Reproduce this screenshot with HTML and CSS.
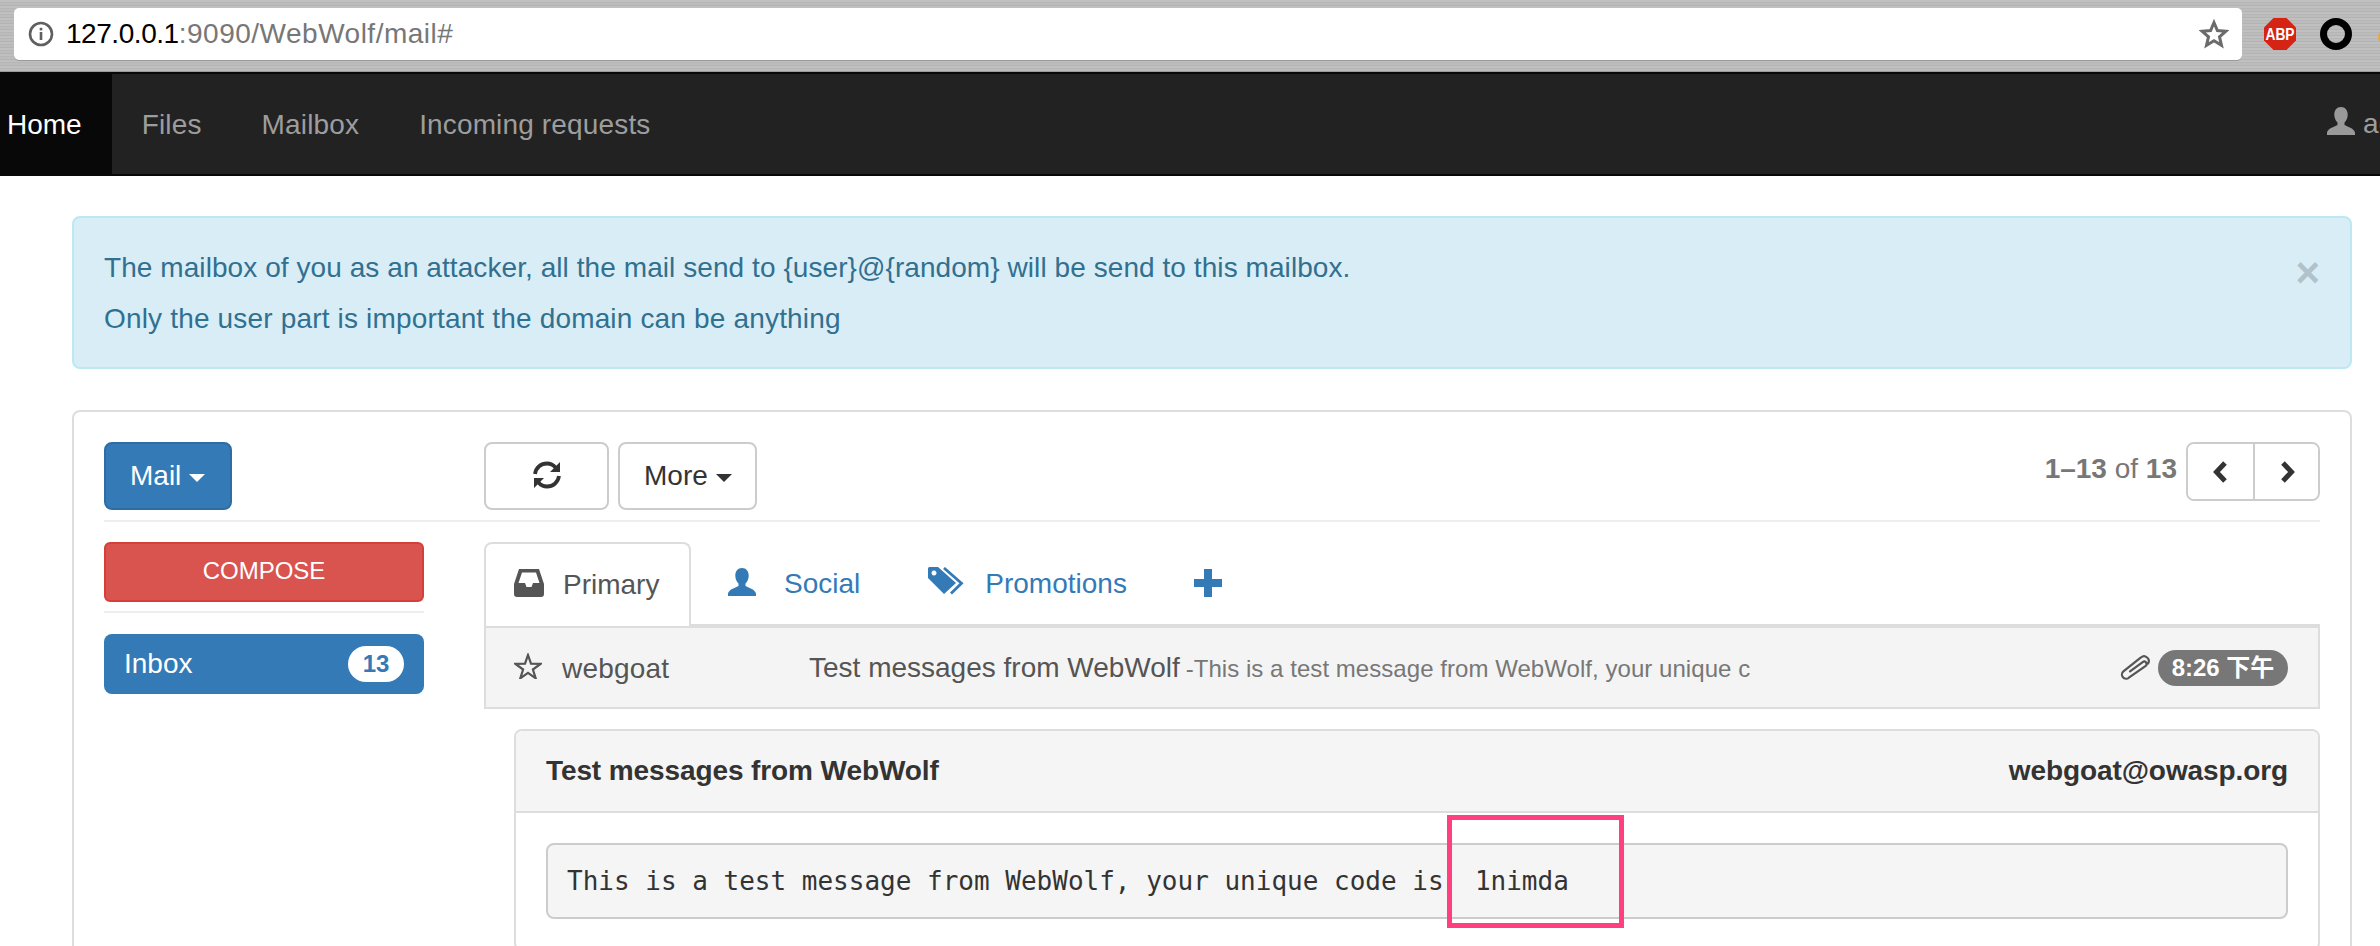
FILE: index.html
```html
<!DOCTYPE html>
<html lang="en">
<head>
<meta charset="utf-8">
<title>WebWolf mail</title>
<link rel="stylesheet" href="styles.css">
</head>
<body>
<header class="chrome">
  <div class="urlbar">
    <svg class="i-info" viewBox="0 0 26 26"><circle cx="13" cy="13" r="11" fill="none" stroke="#5f5f5f" stroke-width="2.6"/><rect x="11.7" y="11" width="2.6" height="8" fill="#5f5f5f"/><rect x="11.7" y="6.8" width="2.6" height="2.6" fill="#5f5f5f"/></svg>
    <span class="url"><span class="url-host">127.0.0.1</span>:9090/WebWolf/mail#</span>
    <svg class="i-bookmark" viewBox="0 0 30 30"><path d="M15 3.5l3.4 8 8.6.7-6.5 5.7 2 8.4-7.5-4.500-7.500 4.500 2-8.400L3 12.200l8.600-.7z" fill="none" stroke="#6b6b6b" stroke-width="3"/></svg>
  </div>
  <svg class="i-abp" viewBox="0 0 32 32"><path d="M9.500 0h13L32 9.500v13L22.500 32h-13L0 22.500v-13z" fill="#d52314"/><text class="abp-text" text-anchor="middle" transform="translate(16 22) scale(.95 1.2)">ABP</text></svg>
  <span class="ring"></span>
  <span class="ext-dot"></span>
</header>

<nav class="navbar">
  <a class="nav-link nav-active">Home</a>
  <a class="nav-link">Files</a>
  <a class="nav-link">Mailbox</a>
  <a class="nav-link">Incoming requests</a>
  <div class="nav-user">
    <svg class="i-user-nav" viewBox="0 0 28 28"><path d="M14 0c-4.300 0-6.700 3.400-6.700 7.600 0 3.300 1.300 6.200 3.200 8v2.400C8 19.600 1 21 0 25.500V28h28v-2.500c-1-4.500-8-5.900-10.500-7.500v-2.400c1.900-1.800 3.200-4.700 3.200-8C20.700 3.400 18.300 0 14 0z" fill="#999"/></svg>
    <span>admin</span>
  </div>
</nav>

<main class="page">
  <section class="alert">
    <span class="close">×</span>
    <p class="alert-line">The mailbox of you as an attacker, all the mail send to {user}@{random} will be send to this mailbox.</p>
    <p class="alert-line">Only the user part is important the domain can be anything</p>
  </section>

  <section class="card">
    <div class="toolbar">
      <div class="toolbar-left">
        <button class="btn btn-primary">Mail <span class="caret caret-light"></span></button>
      </div>
      <div class="toolbar-right">
        <button class="btn btn-default btn-refresh">
          <svg class="i-refresh" viewBox="0 0 28 28"><g fill="none" stroke="#333" stroke-width="3.800"><path d="M2 13C3 6.500 8 2.500 14 2.500c3.600 0 6.400 1.500 8.500 4"/><path d="M26 15c-1 6.500-6 10.500-12 10.500-3.600 0-6.400-1.500-8.500-4"/></g><path d="M27 1v10H17zM1 27V17h10z" fill="#333"/></svg>
        </button>
        <button class="btn btn-default btn-more">More <span class="caret"></span></button>
        <div class="pager-wrap">
          <span class="count"><strong>1–13</strong> of <strong>13</strong></span>
          <div class="btn-group">
            <button class="pg"><svg class="i-chev" viewBox="0 0 16 22"><path d="M12 2L3.500 11l8.500 9" fill="none" stroke="#333" stroke-width="5"/></svg></button>
            <button class="pg pg-next"><svg class="i-chev" viewBox="0 0 16 22"><path d="M4 2l8.500 9L4 20" fill="none" stroke="#333" stroke-width="5"/></svg></button>
          </div>
        </div>
      </div>
    </div>

    <div class="mail">
      <aside class="side">
        <button class="compose">COMPOSE</button>
        <div class="side-rule"></div>
        <a class="inbox"><span>Inbox</span><span class="inbox-badge">13</span></a>
      </aside>

      <div class="content">
        <ul class="tabs">
          <li class="tab tab-active">
            <svg class="i-tab" viewBox="0 0 30 28"><path d="M5 0h20l5 15v10a3 3 0 0 1-3 3H3a3 3 0 0 1-3-3V15zM8 3.500L4.500 14H11l1.500 4h5L19 14h6.500L22 3.500z" fill="#555" fill-rule="evenodd"/></svg>
            <span>Primary</span>
          </li>
          <li class="tab">
            <svg class="i-tab" viewBox="0 0 28 28"><path d="M14 0c-4.300 0-6.700 3.400-6.700 7.600 0 3.300 1.300 6.200 3.200 8v2.400C8 19.600 1 21 0 25.500V28h28v-2.500c-1-4.500-8-5.900-10.500-7.500v-2.400c1.900-1.800 3.200-4.700 3.200-8C20.700 3.400 18.300 0 14 0z" fill="#337ab7"/></svg>
            <span>Social</span>
          </li>
          <li class="tab tab-tags">
            <svg class="i-tags" viewBox="0 0 36 28"><path d="M0 1.500A1.500 1.500 0 0 1 1.500 0H10l18 16-12 11L0 11zM6 3.500a2.500 2.500 0 1 0 .01 0z" fill="#337ab7" fill-rule="evenodd"/><path d="M16 1l17.500 15.200L23 26.500" fill="none" stroke="#337ab7" stroke-width="2.800"/></svg>
            <span>Promotions</span>
          </li>
          <li class="tab">
            <svg class="i-plus" viewBox="0 0 28 28"><path d="M10 0h8v10h10v8H18v10h-8V18H0v-8h10z" fill="#337ab7"/></svg>
          </li>
        </ul>

        <div class="row">
          <svg class="i-star" viewBox="0 0 28 26"><path d="M14 2l3 8.700 9.500.2-7.600 5.600 2.800 8.800L14 19.900l-7.700 5.400 2.800-8.800L1.500 10.900l9.500-.2z" fill="none" stroke="#555" stroke-width="2.200"/></svg>
          <span class="sender">webgoat</span>
          <span class="subject">Test messages from WebWolf <small class="preview">-This is a test message from WebWolf, your unique c</small></span>
          <svg class="i-clip" viewBox="0 0 30 24"><path d="M10 16.500L21.500 8a2.200 2.200 0 0 1 2.800 3.400L9 22.200A3.800 3.800 0 0 1 4 16.400L20 3.800a4.300 4.300 0 0 1 6.500 5.400" fill="none" stroke="#555" stroke-width="2" stroke-linecap="round"/></svg>
          <span class="time">8:26 下午</span>
        </div>

        <article class="panel">
          <div class="panel-head">
            <span>Test messages from WebWolf</span>
            <span>webgoat@owasp.org</span>
          </div>
          <div class="panel-body">
            <pre class="code">This is a test message from WebWolf, your unique code is  1nimda</pre>
            <div class="highlight"></div>
          </div>
        </article>
      </div>
    </div>
  </section>
</main>
</body>
</html>
```

FILE: styles.css
```css
* { box-sizing: border-box; }
html, body { margin: 0; padding: 0; overflow: hidden; height: 100%; background: #fff; }
body { font-family: "Liberation Sans", Arial, sans-serif; font-size: 28px; line-height: 40px; color: #333; }
button { font: inherit; cursor: pointer; }

.chrome {
  height: 72px; display: flex; align-items: flex-start; padding: 8px 0 0 14px; overflow: hidden;
  background: repeating-linear-gradient(180deg, #c0c0c0 0, #c0c0c0 2px, #b6b6b6 2px, #b6b6b6 3px, #bcbcbc 3px, #bcbcbc 5px, #b3b3b3 5px, #b3b3b3 6px);
  border-bottom: 1px solid #9a9a9a;
}
.urlbar { width: 2228px; height: 52px; flex: none; background: #fff; border-radius: 5px; display: flex; align-items: center; padding: 0 13px 0 14px; box-shadow: 0 1px 0 #999; }
.i-info { width: 26px; height: 26px; flex: none; }
.url { margin-left: 12px; font-size: 28px; color: #777; flex: 1; letter-spacing: .5px; }
.url-host { color: #000; letter-spacing: -.45px; }
.i-bookmark { width: 30px; height: 30px; flex: none; }
.i-abp { width: 32px; height: 32px; flex: none; margin: 10px 0 0 22px; }
.abp-text { font: bold 14.5px "Liberation Sans", sans-serif; fill: #fff; }
.ring { width: 32px; height: 32px; flex: none; margin: 10px 0 0 24px; border-radius: 50%; border: 7px solid #000; }
.ext-dot { width: 14px; height: 14px; flex: none; margin: 22px 0 0 26px; border-radius: 50%; background: #e8a93c; }

.navbar { height: 104px; display: flex; background: #222; border-top: 2px solid #080808; border-bottom: 2px solid #080808; overflow: hidden; color: #9d9d9d; letter-spacing: .15px; }
.nav-link { display: flex; align-items: center; padding: 2px 30px 0; height: 100px; color: #9d9d9d; }
.nav-active { background: #080808; color: #fff; padding-left: 7px; letter-spacing: 0; }
.nav-user { margin-left: auto; flex: none; width: 53px; display: flex; align-items: center; gap: 8px; overflow: hidden; white-space: nowrap; color: #9d9d9d; }
.i-user-nav { width: 28px; height: 28px; flex: none; margin-top: -6px; }

.page { padding: 40px 28px 0 72px; }
.alert { position: relative; height: 153px; padding: 30px 70px 30px 30px; border: 2px solid #bce8f1; border-radius: 8px; background: #d9edf7; color: #31708f; }
.alert-line { margin: 0 0 11px; letter-spacing: .07px; }
.alert-line + .alert-line { letter-spacing: .17px; }
.close { position: absolute; top: 34px; right: 30px; font-size: 42px; font-weight: bold; color: #b0c2cb; line-height: 42px; }

.card { margin-top: 41px; padding: 30px; border: 2px solid #ddd; border-radius: 8px; height: 800px; }
.toolbar { display: grid; grid-template-columns: 320px 1fr; column-gap: 60px; padding-bottom: 10px; border-bottom: 2px solid #eee; }
.toolbar-left { display: flex; }
.toolbar-right { display: flex; align-items: flex-start; gap: 9px; }
.btn { height: 68px; padding: 0 24px; border-radius: 8px; border: 2px solid; display: flex; align-items: center; gap: 8px; }
.btn-primary { background: #337ab7; border-color: #2e6da4; color: #fff; width: 128px; }
.btn-default { background: #fff; border-color: #ccc; color: #333; }
.btn-refresh { width: 125px; justify-content: center; padding: 0; }
.btn-more { width: 139px; }
.i-refresh { width: 28px; height: 28px; margin-top: -2px; }
.caret { width: 0; height: 0; border-left: 8px solid transparent; border-right: 8px solid transparent; border-top: 8px solid #333; margin-top: 3px; }
.caret-light { border-top-color: #fff; }
.pager-wrap { margin-left: auto; display: flex; align-items: flex-start; gap: 9px; }
.count { color: #777; line-height: 54px; }
.btn-group { display: flex; height: 59px; border: 2px solid #ccc; border-radius: 8px; }
.pg { width: 65px; height: 55px; border: 0; background: #fff; padding: 0; display: flex; align-items: center; justify-content: center; border-radius: 6px; }
.pg-next { border-left: 2px solid #ccc; border-radius: 0 6px 6px 0; }
.i-chev { width: 16px; height: 22px; }

.mail { display: grid; grid-template-columns: 320px 1fr; column-gap: 60px; margin-top: 20px; }
.compose { width: 100%; height: 60px; background: #d9534f; border: 2px solid #d43f3a; border-radius: 6px; color: #fff; font-size: 24px; padding: 0 0 2px; }
.side-rule { height: 2px; background: #eee; margin: 9px 0 21px; }
.inbox { height: 60px; background: #337ab7; color: #fff; border-radius: 8px; display: flex; align-items: center; justify-content: space-between; padding: 0 20px; }
.inbox-badge { width: 56px; height: 36px; border-radius: 20px; background: #fff; color: #337ab7; font-size: 24px; font-weight: bold; line-height: 36px; text-align: center; }

.tabs { display: flex; margin: 0; padding: 0; list-style: none; height: 84px; color: #337ab7; }
.tab { display: flex; align-items: center; gap: 27px; padding: 0 30px 0 36px; height: 84px; }
.tab-active { width: 207px; padding-left: 28px; gap: 19px; border: 2px solid #ddd; border-bottom: 0; border-radius: 8px 8px 0 0; background: #fff; color: #555; }
.tab-tags { gap: 21px; padding-left: 38px; }
.i-tab { width: 30px; height: 28px; flex: none; margin-top: -4px; }
.i-tags { width: 36px; height: 28px; flex: none; margin-top: -6px; }
.i-plus { width: 28px; height: 28px; flex: none; margin: -2px 0 0 1px; }

.row { height: 85px; display: flex; align-items: center; padding: 2px 30px 0 28px; margin-top: -2px; background: #f4f4f4; border: 2px solid #ddd; border-top-width: 4px; color: #555; }
.i-star { width: 28px; height: 26px; flex: none; margin-top: -6px; }
.sender { width: 247px; margin-left: 20px; flex: none; letter-spacing: .2px; }
.subject { flex: 1; white-space: nowrap; overflow: hidden; }
.preview { font-size: 24px; color: #777; margin-left: -2px; letter-spacing: .05px; }
.i-clip { width: 33px; height: 27px; flex: none; margin: -4px 6px 0 0; }
.time { height: 36px; width: 130px; border-radius: 18px; background: #777; color: #fff; font: bold 24px/36px "Liberation Sans", "Noto Sans CJK SC", sans-serif; text-align: center; flex: none; margin-top: -2px; }

.panel { margin: 20px 0 0 30px; border: 2px solid #ddd; border-radius: 8px; }
.panel-head { height: 82px; padding: 0 30px; background: #f5f5f5; border-bottom: 2px solid #ddd; display: flex; align-items: center; justify-content: space-between; font-weight: bold; border-radius: 6px 6px 0 0; letter-spacing: -.1px; }
.panel-body { position: relative; padding: 30px; }
.code { margin: 0; height: 76px; padding: 17px 19px; font: 26px/38px "DejaVu Sans Mono", monospace; color: #333; background: #f5f5f5; border: 2px solid #ccc; border-radius: 8px; }
.highlight { position: absolute; left: 931px; top: 2px; width: 177px; height: 113px; border: 5px solid #ff3f7f; }
```
